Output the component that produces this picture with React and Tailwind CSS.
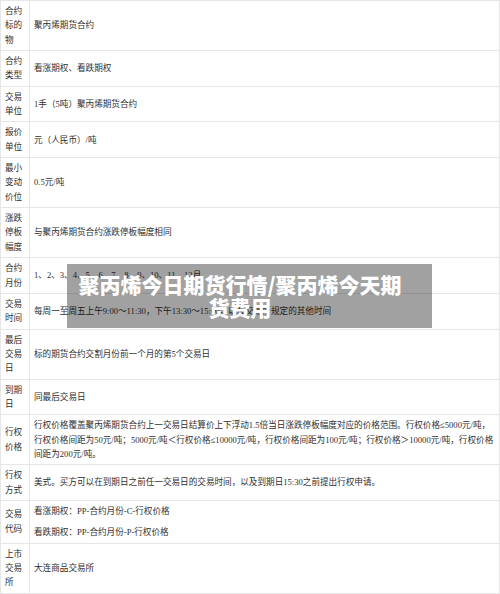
const rows = [
  { label: '合约标的物', content: ['聚丙烯期货合约'] },
  { label: '合约类型', content: ['看涨期权、看跌期权'] },
  { label: '交易单位', content: ['1手（5吨）聚丙烯期货合约'] },
  { label: '报价单位', content: ['元（人民币）/吨'] },
  { label: '最小变动价位', content: ['0.5元/吨'] },
  { label: '涨跌停板幅度', content: ['与聚丙烯期货合约涨跌停板幅度相同'] },
  { label: '合约月份', content: ['1、2、3、4、5、6、7、8、9、10、11、12月'] },
  { label: '交易时间', content: ['每周一至周五上午9:00～11:30，下午13:30～15:00，以及交易所规定的其他时间'] },
  { label: '最后交易日', content: ['标的期货合约交割月份前一个月的第5个交易日'] },
  { label: '到期日', content: ['同最后交易日'] },
  {
    label: '行权价格',
    content: [
      '行权价格覆盖聚丙烯期货合约上一交易日结算价上下浮动1.5倍当日涨跌停板幅度对应的价格范围。行权价格≤5000元/吨，行权价格间距为50元/吨；5000元/吨＜行权价格≤10000元/吨，行权价格间距为100元/吨；行权价格＞10000元/吨，行权价格间距为200元/吨。',
    ],
  },
  { label: '行权方式', content: ['美式。买方可以在到期日之前任一交易日的交易时间，以及到期日15:30之前提出行权申请。'] },
  { label: '交易代码', content: ['看涨期权：PP-合约月份-C-行权价格', '看跌期权：PP-合约月份-P-行权价格'] },
  { label: '上市交易所', content: ['大连商品交易所'] },
];

export default function App() {
  return (
    <div className="relative w-[500px] h-[594px] overflow-hidden bg-white">
      <table
        className="w-[500px] border-collapse text-[8.6px] leading-[14.35px] text-[#2e2e2e]"
        style={{ fontFamily: '"Liberation Serif", "Noto Sans CJK SC", serif' }}
      >
        <tbody>
          {rows.map((row) => (
            <tr key={row.label}>
              <td className="w-[29px] border border-[#e6e6e6] px-[4px] py-[3px] align-middle">
                {row.label}
              </td>
              <td className="border border-[#e6e6e6] px-[4px] py-[3px] align-middle">
                {row.content.map((line, i) => (
                  <p key={i} className={i > 0 ? 'mt-[7px]' : ''}>
                    {line}
                  </p>
                ))}
              </td>
            </tr>
          ))}
        </tbody>
      </table>

      <div className="absolute left-[67px] top-[264px] w-[365px] h-[64px] bg-[rgba(0,0,0,0.37)] pl-[10px] pr-[29px] py-[9px]">
        <p
          className="text-center text-white font-black text-[21px] leading-[23px]"
          style={{ fontFamily: '"Noto Sans CJK SC", "Noto Sans", sans-serif' }}
        >
          聚丙烯今日期货行情/聚丙烯今天期货费用
        </p>
      </div>
    </div>
  );
}
